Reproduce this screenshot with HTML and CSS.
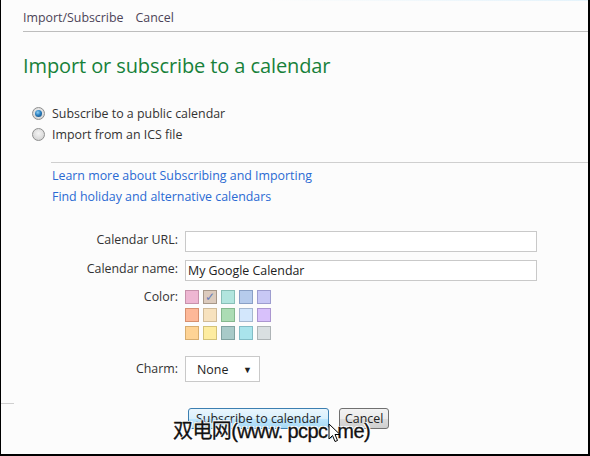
FILE: index.html
```html
<!DOCTYPE html>
<html>
<head>
<meta charset="utf-8">
<link rel="stylesheet" href="styles.css">
</head>
<body>
<div class="frame">
  <div class="topline"></div>
  <nav class="nav">
    <span class="nav-item">Import/Subscribe</span>
    <span class="nav-item">Cancel</span>
  </nav>
  <h1 class="title">Import or subscribe to a calendar</h1>
  <div class="options">
    <label class="opt"><span class="radio checked"></span>Subscribe to a public calendar</label>
    <label class="opt"><span class="radio"></span>Import from an ICS file</label>
  </div>
  <div class="links">
    <a class="link">Learn more about Subscribing and Importing</a>
    <a class="link">Find holiday and alternative calendars</a>
  </div>
  <div class="form">
    <div class="lbl lbl-url">Calendar URL:</div>
    <div class="field"><div class="input"></div></div>
    <div class="lbl lbl-name">Calendar name:</div>
    <div class="field"><div class="input">My Google Calendar</div></div>
    <div class="lbl lbl-color">Color:</div>
    <div class="field">
      <div class="swatches">
        <span class="sw c1"></span>
        <span class="sw c2 on">&#10003;</span>
        <span class="sw c3"></span>
        <span class="sw c4"></span>
        <span class="sw c5"></span>
        <span class="sw c6"></span>
        <span class="sw c7"></span>
        <span class="sw c8"></span>
        <span class="sw c9"></span>
        <span class="sw c10"></span>
        <span class="sw c11"></span>
        <span class="sw c12"></span>
        <span class="sw c13"></span>
        <span class="sw c14"></span>
        <span class="sw c15"></span>
      </div>
    </div>
    <div class="lbl lbl-charm">Charm:</div>
    <div class="field"><div class="select">None<span class="arrow">&#9660;</span></div></div>
  </div>
  <div class="buttons">
    <span class="btn primary">Subscribe to calendar</span>
    <span class="btn">Cancel</span>
  </div>
  <div class="leftmark"></div>
  <div class="watermark">双电网(www. pcpc. me)</div>
  <svg class="cursor" width="14" height="20" viewBox="0 0 14 20">
    <path d="M1 1 L1 16 L4.5 12.5 L7 18.5 L9.5 17.5 L7 11.5 L12 11.5 Z" fill="#fff" stroke="#000" stroke-width="1" stroke-linejoin="round"/>
  </svg>
</div>
</body>
</html>
```
FILE: styles.css
```css
* { box-sizing: border-box; }
html, body { margin: 0; padding: 0; }
body {
  width: 590px;
  height: 456px;
  overflow: hidden;
  background: #fcfcfc;
  font-family: "Open Sans", "Noto Sans", sans-serif;
  font-size: 12px;
  color: #333;
}
.frame {
  position: relative;
  width: 590px;
  height: 456px;
  border-left: 1px solid #000;
  border-right: 2px solid #000;
  border-bottom: 2px solid #000;
  background: #fcfcfc;
}
.topline {
  height: 1px;
  background: linear-gradient(to right, #fcfcfc 0%, #fcfcfc 45%, #e4f3fb 100%);
}
.nav {
  margin-left: 22px;
  height: 31px;
  border-bottom: 1px solid #bdbdbd;
  display: flex;
  gap: 12px;
  padding-top: 9px;
  line-height: 16px;
  font-size: 12.4px;
  color: #4c4458;
}
.title {
  margin: 20px 0 0 22px;
  font-weight: normal;
  font-size: 20px;
  line-height: 28px;
  color: #17813a;
  letter-spacing: -0.1px;
}
.options {
  margin: 25px 0 0 31px;
  display: flex;
  flex-direction: column;
  gap: 5px;
}
.opt {
  display: flex;
  align-items: center;
  gap: 7px;
  height: 16px;
  font-size: 12.4px;
  color: #333;
}
.radio {
  width: 13px;
  height: 13px;
  border-radius: 50%;
  border: 1px solid #8e8f8f;
  background: radial-gradient(circle at 50% 40%, #f4f4f4 0%, #dcdcdc 60%, #c8c8c8 100%);
  position: relative;
}
.radio.checked::after {
  content: "";
  position: absolute;
  left: 2px;
  top: 2px;
  width: 7px;
  height: 7px;
  border-radius: 50%;
  background: radial-gradient(circle at 40% 35%, #8fd0f5 0%, #2a7fbf 45%, #0c3e6f 100%);
}
.links {
  margin: 20px 0 0 50px;
  border-top: 1px solid #cfcfcf;
  padding: 5px 0 0 1px;
  display: flex;
  flex-direction: column;
  gap: 5px;
}
.link {
  font-size: 12.4px;
  line-height: 16px;
  color: #2a6ad3;
}
.form {
  margin-top: 26px;
  display: grid;
  grid-template-columns: 177px 352px;
  column-gap: 7px;
  row-gap: 8px;
  font-size: 12.4px;
}
.lbl {
  text-align: right;
  color: #333;
  line-height: 16px;
}
.lbl-url, .lbl-name { padding-top: 1px; }
.lbl-color { padding-top: 0; }
.lbl-charm { padding-top: 5px; }
.input {
  height: 21px;
  border: 1px solid #c9c9c9;
  background: #fff;
  padding: 1px 0 0 2px;
  line-height: 17px;
  color: #222;
}
.swatches {
  display: grid;
  grid-template-columns: repeat(5, 14px);
  grid-auto-rows: 14px;
  column-gap: 4px;
  row-gap: 4px;
  padding-top: 1px;
  margin-bottom: 8px;
}
.sw {
  display: block;
  border: 1px solid;
  font-size: 12px;
  line-height: 12px;
  text-align: center;
  color: #6a7fb8;
}
.c1 { background: #eeb6d2; border-color: #c791ab; }
.c2 { background: #dccbbd; border-color: #a79889; }
.c3 { background: #b2e5de; border-color: #88bfb7; }
.c4 { background: #b6cbec; border-color: #8aa0c6; }
.c5 { background: #c8c8f5; border-color: #9d9dcf; }
.c6 { background: #fdb898; border-color: #d69070; }
.c7 { background: #f7e2be; border-color: #d0bb98; }
.c8 { background: #acdcb4; border-color: #85b88e; }
.c9 { background: #d3e7fc; border-color: #a5b8cf; }
.c10 { background: #d8c1fb; border-color: #ab96d0; }
.c11 { background: #fed395; border-color: #d7ad70; }
.c12 { background: #fdeca0; border-color: #d3c279; }
.c13 { background: #a8cac8; border-color: #80a2a0; }
.c14 { background: #a9e4ec; border-color: #82bdc6; }
.c15 { background: #d9dfe1; border-color: #aeb4b6; }
.select {
  width: 75px;
  height: 26px;
  border: 1px solid #c9c9c9;
  background: #fff;
  padding: 5px 0 0 11px;
  line-height: 16px;
  font-size: 12.4px;
  color: #222;
  position: relative;
}
.arrow {
  position: absolute;
  right: 7px;
  top: 5px;
  font-size: 9px;
  color: #222;
}
.buttons {
  margin: 26px 0 0 187px;
  display: flex;
  gap: 10px;
}
.btn {
  height: 21px;
  padding: 0 5px;
  border: 1px solid #707070;
  border-radius: 3px;
  background: linear-gradient(#f2f2f2 0%, #ebebeb 50%, #dcdcdc 51%, #cfcfcf 100%);
  font-size: 12.4px;
  line-height: 19px;
  color: #222;
}
.btn.primary {
  width: 141px;
  text-align: center;
  border-color: #3c7fb1;
  background: linear-gradient(#eaf6fd 0%, #d9f0fc 50%, #bee6fd 51%, #a7d9f5 100%);
}
.leftmark {
  position: absolute;
  left: 0;
  top: 403px;
  width: 13px;
  height: 1px;
  background: #cfcfcf;
}
.watermark {
  position: absolute;
  left: 172px;
  top: 418px;
  font-family: "Liberation Sans", "Noto Sans CJK SC", sans-serif;
  font-size: 20px;
  line-height: 26px;
  letter-spacing: -0.6px;
  color: #111;
  -webkit-text-stroke: 0.3px #111;
  text-shadow: 1px 1px 0 #fff, -1px -1px 0 #fff, 1px -1px 0 #fff, -1px 1px 0 #fff;
  white-space: nowrap;
}
.cursor {
  position: absolute;
  left: 327px;
  top: 423px;
}
```
